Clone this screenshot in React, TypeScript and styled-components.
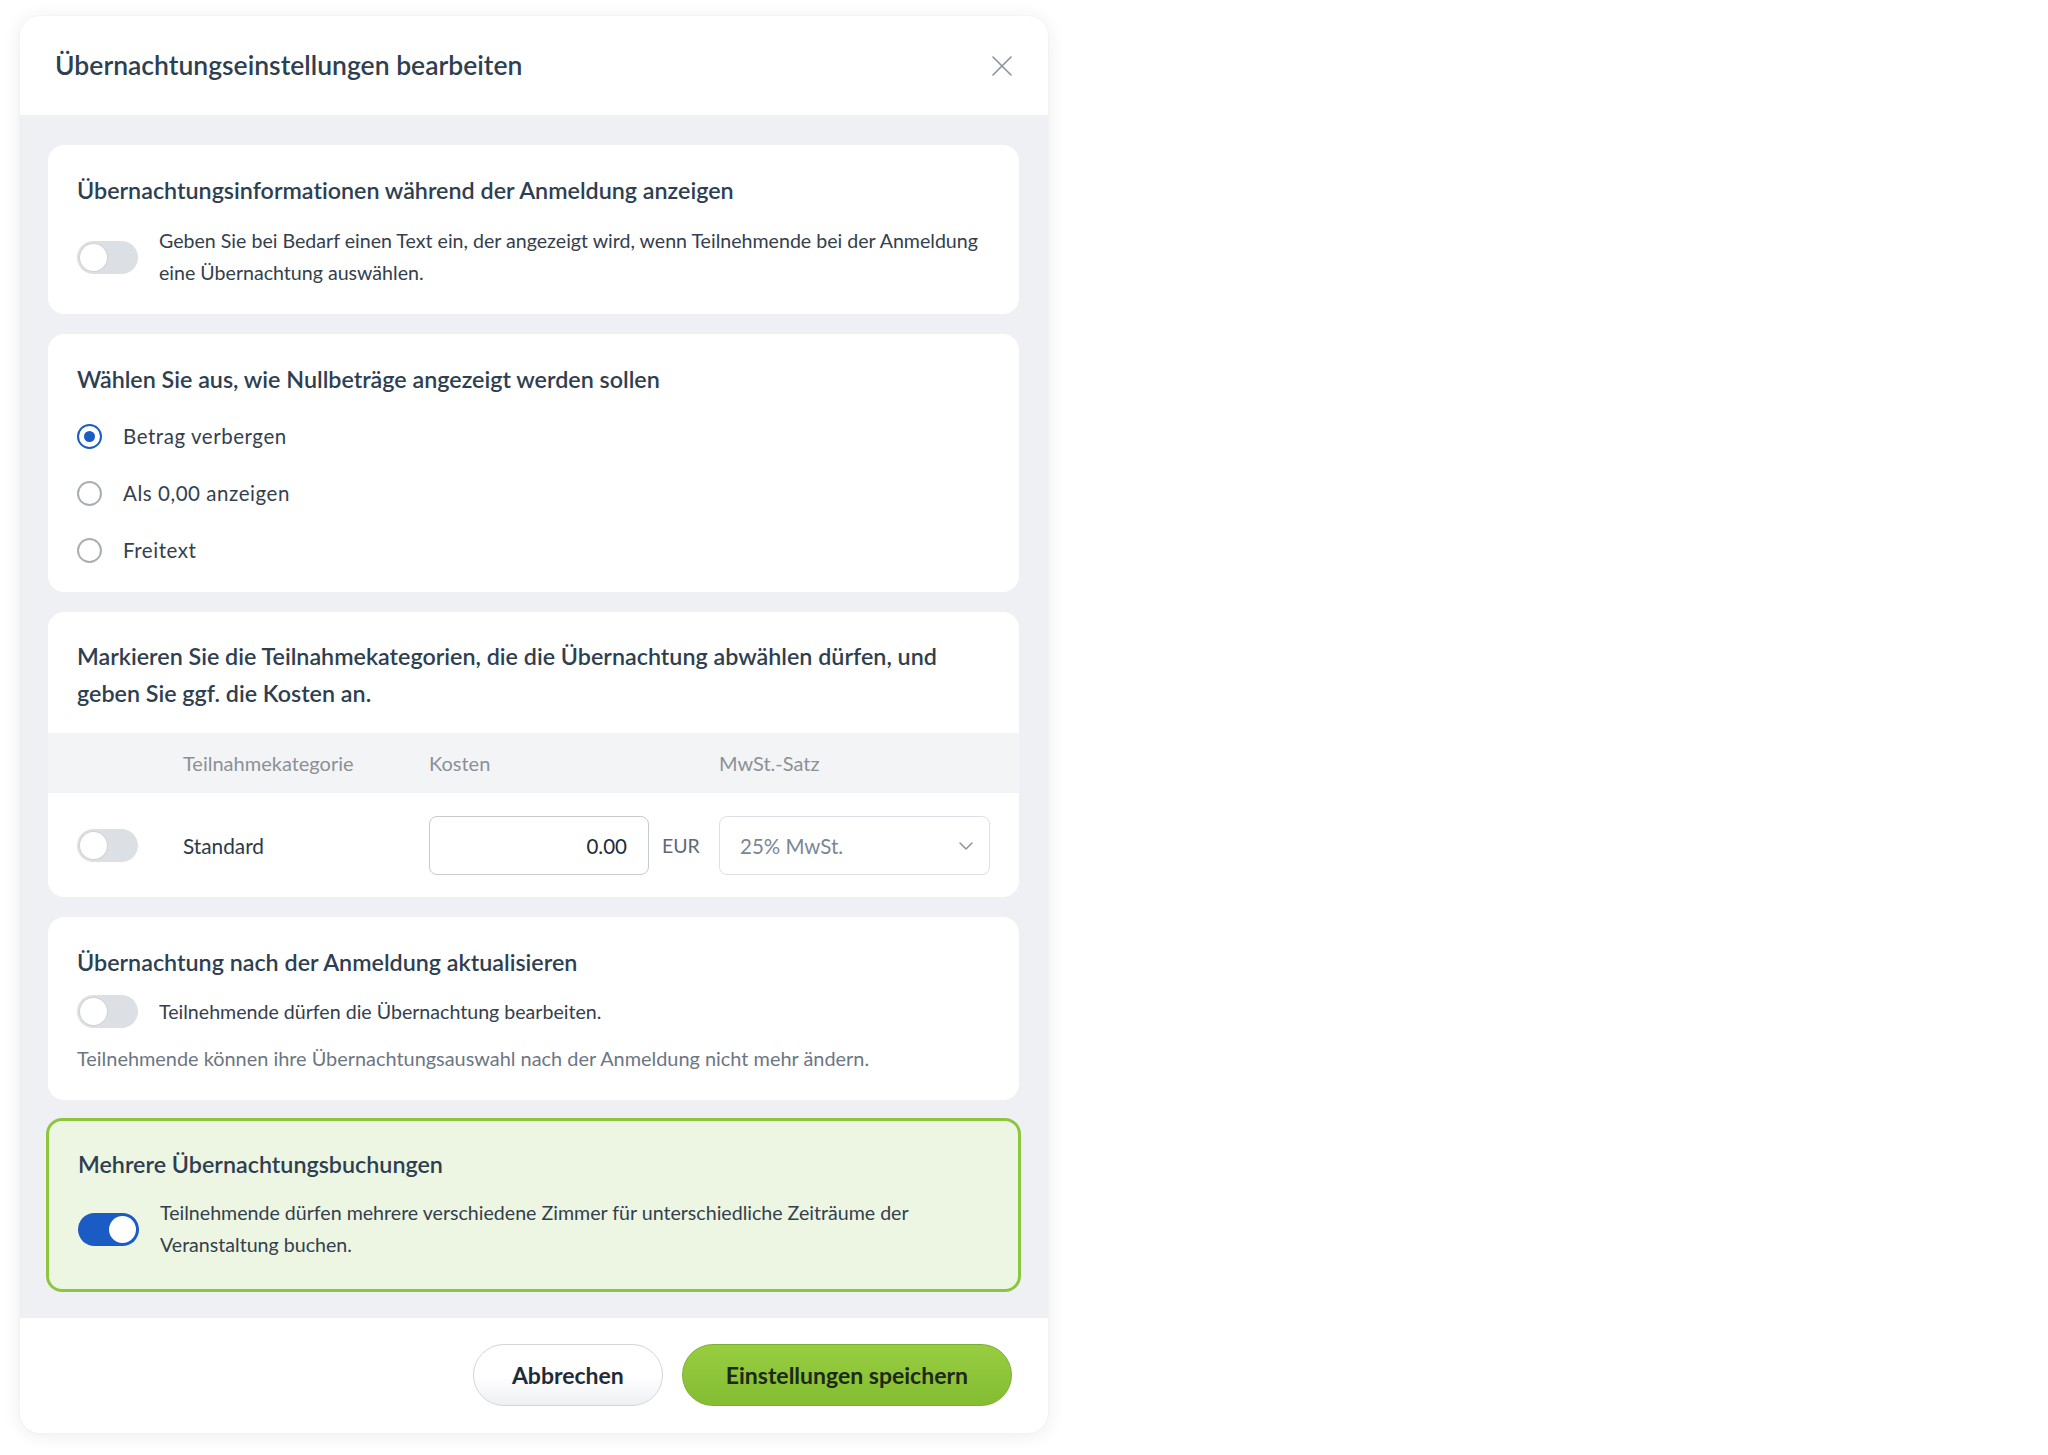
import React from "react";
import styled, { createGlobalStyle } from "styled-components";

const GlobalStyle = createGlobalStyle`
  html, body { margin: 0; padding: 0; background: #ffffff; }
  body {
    font-family: Lato, "Noto Sans", "Liberation Sans", sans-serif;
    color: #34404d;
    font-variant-ligatures: no-common-ligatures;
  }
  * { box-sizing: border-box; }
`;

const Page = styled.div`
  padding: 16px 0 20px 20px;
`;

const Modal = styled.div`
  width: 1028px;
  background: #ffffff;
  border-radius: 20px;
  box-shadow: 0 2px 18px rgba(30, 40, 60, 0.09), 0 0 2px rgba(30, 40, 60, 0.05);
  overflow: hidden;
`;

const Header = styled.div`
  display: flex;
  align-items: center;
  justify-content: space-between;
  padding: 29px 36px 29px 35px;
`;

const ModalTitle = styled.h1`
  margin: 0;
  font-size: 26.5px;
  line-height: 41px;
  font-weight: 600;
  color: #2e3f51;
`;

const CloseButton = styled.button`
  border: 0;
  background: transparent;
  padding: 0;
  width: 20px;
  height: 20px;
  display: flex;
  cursor: pointer;
`;

const Body = styled.div`
  background: #eef0f3;
  padding: 30px 29px 28px 28px;
  display: flex;
  flex-direction: column;
  gap: 20px;
`;

const Card = styled.section<{ $pt?: number; $pb?: number; $highlight?: boolean }>`
  background: ${(p) => (p.$highlight ? "#edf6e2" : "#ffffff")};
  border: ${(p) => (p.$highlight ? "3px solid #8cc63f" : "0")};
  margin: ${(p) => (p.$highlight ? "-2px -2px" : "0")};
  border-radius: 16px;
  padding: ${(p) => p.$pt ?? 27}px 29px ${(p) => p.$pb ?? 25}px;
`;

const CardTitle = styled.h2<{ $mb?: number }>`
  margin: 0 0 ${(p) => p.$mb ?? 14}px;
  font-size: 23.3px;
  line-height: 37px;
  font-weight: 600;
  color: #2e3f51;
`;

const ToggleRow = styled.div`
  display: flex;
  align-items: center;
  gap: 21px;
`;

const BodyText = styled.p`
  margin: 0;
  font-size: 19.6px;
  line-height: 32px;
  color: #34404d;
`;

const HintText = styled.p`
  margin: 17px 0 0;
  font-size: 19.9px;
  line-height: 26px;
  color: #6c7683;
`;

const Track = styled.span<{ $on?: boolean }>`
  position: relative;
  flex: 0 0 auto;
  width: 61px;
  height: 33px;
  border-radius: 17px;
  background: ${(p) => (p.$on ? "#1b5bc4" : "#dcdfe4")};
`;

const Knob = styled.span<{ $on?: boolean }>`
  position: absolute;
  top: 3px;
  left: ${(p) => (p.$on ? "31px" : "3px")};
  width: 27px;
  height: 27px;
  border-radius: 50%;
  background: #ffffff;
  box-shadow: ${(p) => (p.$on ? "none" : "0 0 0 1px rgba(120,130,140,0.12)")};
`;

const Toggle = ({ on }: { on?: boolean }) => (
  <Track $on={on}>
    <Knob $on={on} />
  </Track>
);

const RadioList = styled.div`
  margin-top: 16px;
  display: flex;
  flex-direction: column;
  gap: 13px;
`;

const RadioRow = styled.label`
  display: flex;
  align-items: center;
  gap: 21px;
  height: 44px;
  font-size: 20.5px;
  letter-spacing: 0.55px;
  color: #34404d;
`;

const RadioCircle = styled.span<{ $checked?: boolean }>`
  width: 25px;
  height: 25px;
  border-radius: 50%;
  border: 2px solid ${(p) => (p.$checked ? "#1b5bc4" : "#a9aeb5")};
  display: flex;
  align-items: center;
  justify-content: center;
  &::after {
    content: "";
    width: 11px;
    height: 11px;
    border-radius: 50%;
    background: ${(p) => (p.$checked ? "#1b5bc4" : "transparent")};
  }
`;

const columns = "106px 246px 220px 70px 1fr";

const TableHead = styled.div`
  margin: 21px -29px 0;
  padding: 0 29px;
  height: 60px;
  background: #f3f4f6;
  display: grid;
  grid-template-columns: ${columns};
  align-items: center;
`;

const HeadCell = styled.span<{ $col: number }>`
  grid-column: ${(p) => p.$col};
  font-size: 20px;
  color: #8b9096;
`;

const TableRow = styled.div`
  padding-top: 23px;
  display: grid;
  grid-template-columns: ${columns};
  align-items: center;
`;

const CategoryName = styled.span`
  font-size: 20.8px;
  color: #2c3a48;
`;

const AmountInput = styled.div`
  height: 59px;
  border: 1.5px solid #c6cbd1;
  border-radius: 8px;
  display: flex;
  align-items: center;
  justify-content: flex-end;
  padding-right: 21px;
  font-size: 20.5px;
  color: #1f2a36;
`;

const Currency = styled.span`
  padding-left: 13px;
  font-size: 19.5px;
  color: #5f6976;
`;

const Select = styled.div`
  height: 59px;
  border: 1.5px solid #dde1e6;
  border-radius: 8px;
  display: flex;
  align-items: center;
  justify-content: space-between;
  padding: 0 16px 0 20px;
  font-size: 20.5px;
  color: #7c8794;
`;

const Footer = styled.div`
  display: flex;
  justify-content: flex-end;
  gap: 19px;
  padding: 26px 36px 27px;
`;

const Button = styled.button<{ $primary?: boolean }>`
  height: 62px;
  padding: 0 ${(p) => (p.$primary ? 43 : 38)}px;
  border-radius: 31px;
  font-family: Lato, "Noto Sans", sans-serif;
  font-size: 23px;
  font-weight: 700;
  cursor: pointer;
  color: ${(p) => (p.$primary ? "#1b2916" : "#1f2b37")};
  border: 1.5px solid ${(p) => (p.$primary ? "#7caf37" : "#d2d5da")};
  background: ${(p) =>
    p.$primary
      ? "linear-gradient(180deg, #98cd41 0%, #84bd32 100%)"
      : "linear-gradient(180deg, #ffffff 0%, #ffffff 50%, #eff0f3 100%)"};
`;

export default function App() {
  return (
    <>
      <GlobalStyle />
      <Page>
        <Modal>
          <Header>
            <ModalTitle>Übernachtungseinstellungen bearbeiten</ModalTitle>
            <CloseButton aria-label="Schließen">
              <svg width="20" height="20" viewBox="0 0 20 20">
                <path d="M1 1 L19 19 M19 1 L1 19" stroke="#8592a0" strokeWidth="1.6" strokeLinecap="round" />
              </svg>
            </CloseButton>
          </Header>
          <Body>
            <Card>
              <CardTitle $mb={16}>Übernachtungsinformationen während der Anmeldung anzeigen</CardTitle>
              <ToggleRow>
                <Toggle />
                <BodyText>
                  Geben Sie bei Bedarf einen Text ein, der angezeigt wird, wenn Teilnehmende bei der Anmeldung
                  eine Übernachtung auswählen.
                </BodyText>
              </ToggleRow>
            </Card>

            <Card $pb={20}>
              <CardTitle $mb={0}>Wählen Sie aus, wie Nullbeträge angezeigt werden sollen</CardTitle>
              <RadioList>
                <RadioRow>
                  <RadioCircle $checked />
                  Betrag verbergen
                </RadioRow>
                <RadioRow>
                  <RadioCircle />
                  Als 0,00 anzeigen
                </RadioRow>
                <RadioRow>
                  <RadioCircle />
                  Freitext
                </RadioRow>
              </RadioList>
            </Card>

            <Card $pt={26} $pb={22}>
              <CardTitle $mb={0}>
                Markieren Sie die Teilnahmekategorien, die die Übernachtung abwählen dürfen, und
                <br />
                geben Sie ggf. die Kosten an.
              </CardTitle>
              <TableHead>
                <HeadCell $col={2}>Teilnahmekategorie</HeadCell>
                <HeadCell $col={3}>Kosten</HeadCell>
                <HeadCell $col={5}>MwSt.-Satz</HeadCell>
              </TableHead>
              <TableRow>
                <Toggle />
                <CategoryName>Standard</CategoryName>
                <AmountInput>0.00</AmountInput>
                <Currency>EUR</Currency>
                <Select>
                  25% MwSt.
                  <svg width="14" height="8" viewBox="0 0 14 8">
                    <path d="M1 1 L7 7 L13 1" fill="none" stroke="#8a949f" strokeWidth="1.5" strokeLinecap="round" strokeLinejoin="round" />
                  </svg>
                </Select>
              </TableRow>
            </Card>

            <Card $pb={29}>
              <CardTitle>Übernachtung nach der Anmeldung aktualisieren</CardTitle>
              <ToggleRow>
                <Toggle />
                <BodyText>Teilnehmende dürfen die Übernachtung bearbeiten.</BodyText>
              </ToggleRow>
              <HintText>Teilnehmende können ihre Übernachtungsauswahl nach der Anmeldung nicht mehr ändern.</HintText>
            </Card>

            <Card $highlight $pt={25} $pb={28}>
              <CardTitle>Mehrere Übernachtungsbuchungen</CardTitle>
              <ToggleRow>
                <Toggle on />
                <BodyText>
                  Teilnehmende dürfen mehrere verschiedene Zimmer für unterschiedliche Zeiträume der Veranstaltung
                  buchen.
                </BodyText>
              </ToggleRow>
            </Card>
          </Body>
          <Footer>
            <Button>Abbrechen</Button>
            <Button $primary>Einstellungen speichern</Button>
          </Footer>
        </Modal>
      </Page>
    </>
  );
}
